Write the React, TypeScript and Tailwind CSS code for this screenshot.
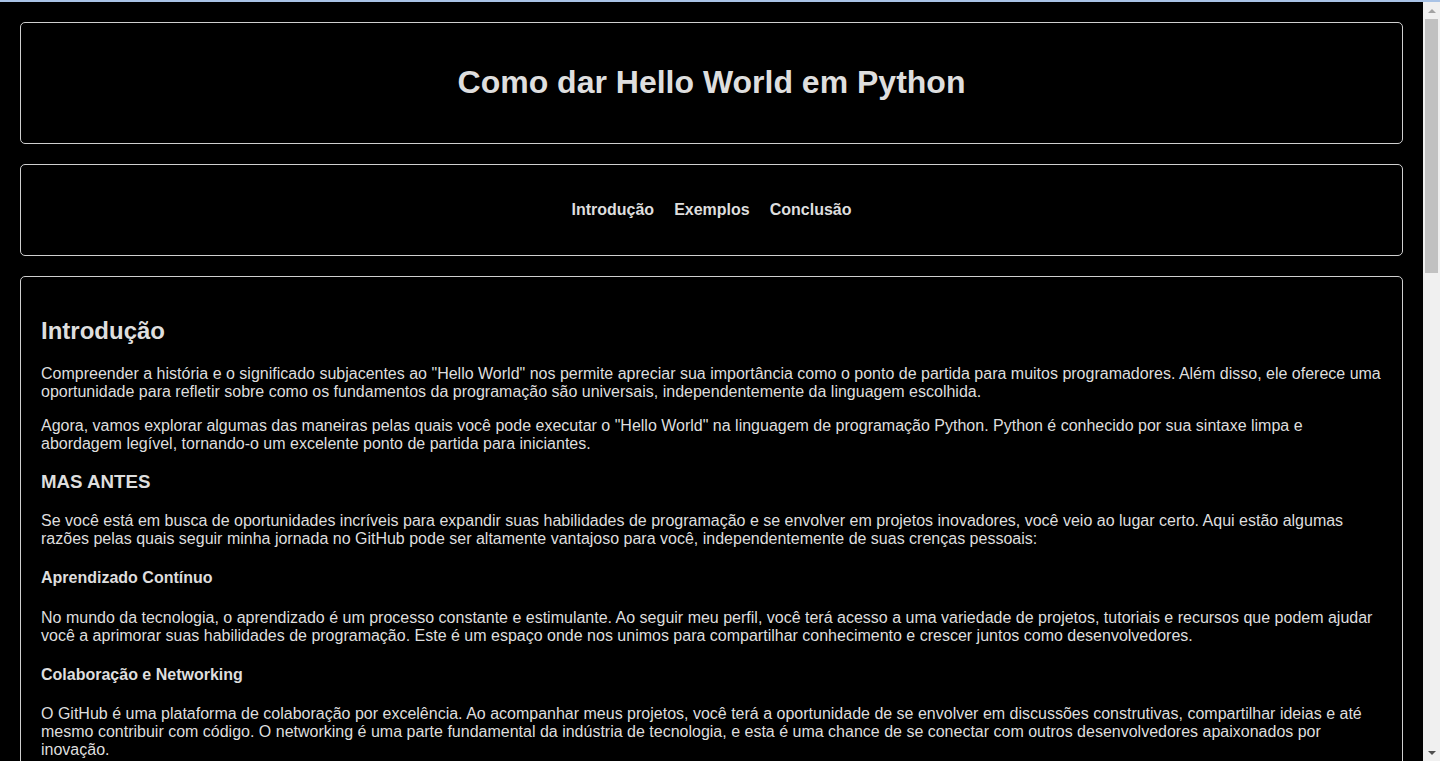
const sections = [
  {
    title: 'Aprendizado Contínuo',
    text: 'No mundo da tecnologia, o aprendizado é um processo constante e estimulante. Ao seguir meu perfil, você terá acesso a uma variedade de projetos, tutoriais e recursos que podem ajudar você a aprimorar suas habilidades de programação. Este é um espaço onde nos unimos para compartilhar conhecimento e crescer juntos como desenvolvedores.',
  },
  {
    title: 'Colaboração e Networking',
    text: 'O GitHub é uma plataforma de colaboração por excelência. Ao acompanhar meus projetos, você terá a oportunidade de se envolver em discussões construtivas, compartilhar ideias e até mesmo contribuir com código. O networking é uma parte fundamental da indústria de tecnologia, e esta é uma chance de se conectar com outros desenvolvedores apaixonados por inovação.',
  },
  {
    title: 'Inspiração e Criatividade',
    text: 'Explorar projetos de outras pessoas pode ser uma fonte inesgotável de inspiração. Você encontrará ideias novas, abordagens diferentes e soluções criativas que podem despertar a sua própria criatividade.',
  },
];

function Scrollbar() {
  return (
    <div className="flex w-[17px] shrink-0 flex-col items-center bg-[#f0f0f0]">
      <div className="flex h-[17px] w-full items-center justify-center">
        <div className="h-0 w-0 border-x-[4px] border-b-[4px] border-x-transparent border-b-[#a3a3a3]" />
      </div>
      <div className="h-[254px] w-[13px] bg-[#c1c1c1]" />
      <div className="flex-1" />
      <div className="flex h-[17px] w-full items-center justify-center">
        <div className="h-0 w-0 border-x-[4px] border-t-[4px] border-x-transparent border-t-[#505050]" />
      </div>
    </div>
  );
}

function App() {
  return (
    <div className="flex h-screen flex-col overflow-hidden bg-black font-['Liberation_Sans',Arial,sans-serif] leading-[normal] text-[#dedede]">
      <div className="h-[2px] shrink-0 bg-[#a9c3e6]" />
      <div className="flex min-h-0 flex-1">
        <div className="min-w-0 flex-1 overflow-hidden">
          <div className="space-y-[20px] p-5">
            <header className="rounded-[5px] border border-[#cfcfcf] p-5 text-center">
              <h1 className="my-[21.44px] text-[32px] leading-[normal] font-bold">Como dar Hello World em Python</h1>
            </header>

            <nav className="rounded-[5px] border border-[#cfcfcf] p-5">
              <ul className="my-4 flex justify-center gap-5 text-[16px] leading-[normal] font-bold">
                <li>Introdução</li>
                <li>Exemplos</li>
                <li>Conclusão</li>
              </ul>
            </nav>

            <main className="rounded-[5px] border border-[#cfcfcf] p-5 text-[16px] leading-[normal]">
              <h2 className="my-[19.92px] text-[24px] leading-[normal] font-bold">Introdução</h2>
              <p className="my-4">
                Compreender a história e o significado subjacentes ao "Hello World" nos permite apreciar sua importância como o ponto de partida para muitos programadores. Além disso, ele oferece uma oportunidade para refletir sobre como os fundamentos da programação são universais, independentemente da linguagem escolhida.
              </p>
              <p className="my-4">
                Agora, vamos explorar algumas das maneiras pelas quais você pode executar o "Hello World" na linguagem de programação Python. Python é conhecido por sua sintaxe limpa e abordagem legível, tornando-o um excelente ponto de partida para iniciantes.
              </p>
              <h3 className="my-[18.72px] text-[18.72px] leading-[normal] font-bold">MAS ANTES</h3>
              <p className="my-4">
                Se você está em busca de oportunidades incríveis para expandir suas habilidades de programação e se envolver em projetos inovadores, você veio ao lugar certo. Aqui estão algumas razões pelas quais seguir minha jornada no GitHub pode ser altamente vantajoso para você, independentemente de suas crenças pessoais:
              </p>
              {sections.map((s) => (
                <div key={s.title}>
                  <h4 className="my-[21.28px] font-bold">{s.title}</h4>
                  <p className="my-4">{s.text}</p>
                </div>
              ))}
            </main>
          </div>
        </div>
        <Scrollbar />
      </div>
    </div>
  );
}

export default App;
